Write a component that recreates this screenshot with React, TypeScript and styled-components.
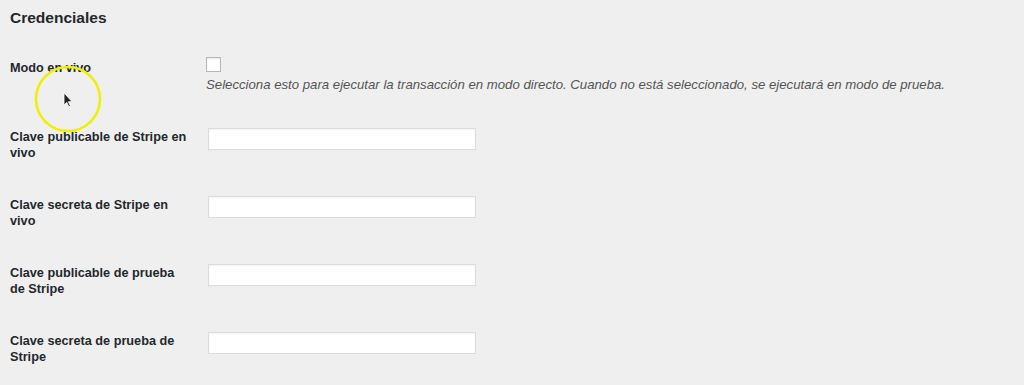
import React from "react";
import styled, { createGlobalStyle } from "styled-components";

const GlobalStyle = createGlobalStyle`
  html, body {
    margin: 0;
    padding: 0;
    background: #efefef;
  }
  body {
    font-family: "Liberation Sans", Arial, sans-serif;
    color: #23282d;
  }
`;

const fields = [
  "Clave publicable de Stripe en vivo",
  "Clave secreta de Stripe en vivo",
  "Clave publicable de prueba de Stripe",
  "Clave secreta de prueba de Stripe",
];

const App = () => {
  return (
    <>
      <GlobalStyle />
      <Page>
        <Heading>Credenciales</Heading>
        <FormTable>
          <CheckRow>
            <Label $offset={3}>Modo en vivo</Label>
            <Field>
              <Checkbox type="checkbox" />
              <Description>
                Selecciona esto para ejecutar la transacción en modo directo. Cuando no está
                seleccionado, se ejecutará en modo de prueba.
              </Description>
            </Field>
          </CheckRow>
          {fields.map((f) => (
            <Row key={f}>
              <Label>{f}</Label>
              <Field>
                <TextInput type="text" />
              </Field>
            </Row>
          ))}
        </FormTable>
        <CursorHighlight width="70" height="70" viewBox="0 0 70 70">
          <circle cx="35" cy="35" r="32" fill="none" stroke="#eef000" strokeWidth="2.5" />
          <path
            d="M31 29 L31 41 L33.8 38.4 L35.8 42.8 L37.4 42 L35.4 37.8 L39 37.6 Z"
            fill="#222"
            stroke="#fff"
            strokeWidth="0.8"
          />
        </CursorHighlight>
      </Page>
    </>
  );
};

const Page = styled.div`
  position: relative;
  padding: 8px 0 0 10px;
  height: 377px;
  overflow: hidden;
`;

const Heading = styled.h2`
  margin: 0;
  font-size: 15.5px;
  line-height: 20px;
  font-weight: bold;
`;

const FormTable = styled.div`
  display: flex;
  flex-direction: column;
`;

const Row = styled.div`
  display: grid;
  grid-template-columns: 198px 1fr;
  padding: 17px 0;
  height: 34px;
`;

const CheckRow = styled(Row)`
  padding: 29px 0 18px;
  height: auto;
`;

const Label = styled.div<{ $offset?: number }>`
  font-size: 12.7px;
  font-weight: bold;
  line-height: 16px;
  width: 179px;
  margin-top: ${(p) => p.$offset ?? 1}px;
`;

const Field = styled.div`
  display: flex;
  flex-direction: column;
  align-items: flex-start;
`;

const Checkbox = styled.input`
  appearance: none;
  margin: 0 0 0 -2px;
  width: 15px;
  height: 15px;
  background: #fff;
  border: 1px solid #b4b9be;
  box-sizing: border-box;
  box-shadow: inset 0 1px 2px rgba(0, 0, 0, 0.1);
`;

const Description = styled.p`
  margin: 5px 0 0 -2px;
  font-size: 13.2px;
  line-height: 16px;
  font-style: italic;
  color: #555;
  white-space: nowrap;
`;

const TextInput = styled.input`
  width: 268px;
  height: 22px;
  margin: 0;
  box-sizing: border-box;
  background: #fff;
  border: 1px solid #dcdcdc;
  box-shadow: inset 0 1px 2px rgba(0, 0, 0, 0.05);
  outline: none;
`;

const CursorHighlight = styled.svg`
  position: absolute;
  left: 33px;
  top: 64px;
  pointer-events: none;
`;

export default App;
